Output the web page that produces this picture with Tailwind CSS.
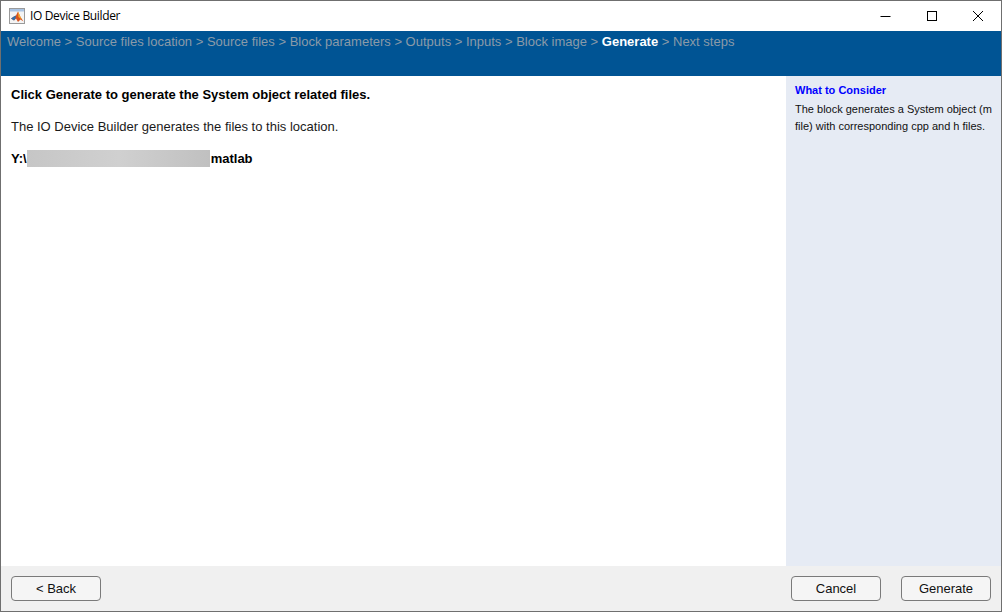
<!DOCTYPE html>
<html>
<head>
<meta charset="utf-8">
<script src="https://cdn.jsdelivr.net/npm/@tailwindcss/browser@4"></script>
</head>
<body class="m-0 bg-white">
<div class="w-[1002px] h-[612px] flex flex-col border border-[#6f6f6f] overflow-hidden font-['Liberation_Sans',Arial,sans-serif] text-black">
  <div class="h-[30px] shrink-0 flex items-center bg-white">
    <svg class="ml-[8px] w-[16px] h-[16px] shrink-0" viewBox="0 0 16 16">
      <rect x="0.5" y="0.5" width="15" height="15" fill="#f4f4f4" stroke="#9a9a9a"/>
      <rect x="1" y="1" width="14" height="2.5" fill="#a9c4e4"/>
      <path d="M2 10.5 L5 8.5 L7 7.5 L9 3.5 L11.5 9 L14.5 13.5 L11.5 11.5 L9 14 L7 10.5 L5 12.5 Z" fill="#d9541e"/>
      <path d="M2 10.5 L5 8.5 L7 7.5 L6.5 10.5 L5 12.5 Z" fill="#2f6fb0"/>
      <path d="M9 3.5 L11.5 9 L13 11.5 L9.5 9 Z" fill="#f5b030"/>
    </svg>
    <span class="ml-[5px] text-[12px] font-['Open_Sans',sans-serif] leading-none tracking-[-0.35px]">IO Device Builder</span>
    <div class="ml-auto flex items-center">
      <svg class="w-[46px] h-[30px]" viewBox="0 0 46 30"><path d="M17.5 15.5 H27.5" stroke="#000" fill="none"/></svg>
      <svg class="w-[46px] h-[30px]" viewBox="0 0 46 30"><rect x="18.5" y="10.5" width="9" height="9" stroke="#000" fill="none"/></svg>
      <svg class="w-[46px] h-[30px]" viewBox="0 0 46 30"><path d="M18 10 L28 20 M28 10 L18 20" stroke="#000" fill="none"/></svg>
    </div>
  </div>
  <div class="h-[45px] shrink-0 bg-[#005494] px-[6px] pt-[3px] text-[13px] leading-[16px] text-[#8a9aa8] whitespace-pre">Welcome &gt; Source files location &gt; Source files &gt; Block parameters &gt; Outputs &gt; Inputs &gt; Block image &gt; <b class="text-white font-bold">Generate</b> &gt; Next steps</div>
  <div class="flex-1 flex min-h-0">
    <div class="flex-1 pl-[10px] pt-[11px] text-[13px] leading-[16px] flex flex-col items-start">
      <p class="font-bold">Click Generate to generate the System object related files.</p>
      <p class="mt-[16px] text-[#1a1a1a]">The IO Device Builder generates the files to this location.</p>
      <p class="mt-[15px] font-bold flex items-center h-[17px]"><span>Y:\</span><span class="w-[183px] h-[17px] bg-gradient-to-r from-[#c6c6c6] via-[#d0d0d0] to-[#c0c0c0]"></span><span class="ml-[1px]">matlab</span></p>
    </div>
    <div class="w-[215px] shrink-0 bg-[#e6ebf4] pl-[9px] pt-[7px] pr-[4px] text-[11px]">
      <p class="text-[#0000ff] font-bold leading-[14px]">What to Consider</p>
      <p class="mt-[4px] leading-[17px] text-[#111]">The block generates a System object (m file) with corresponding cpp and h files.</p>
    </div>
  </div>
  <div class="h-[45px] shrink-0 bg-[#f0f0f0] flex items-start pt-[10px] pl-[10px] pr-[10px] text-[13px]">
    <button class="w-[90px] h-[25px] rounded-[4px] border border-[#7a7a7a] bg-[#f5f5f5] text-[#111]">&lt; Back</button>
    <button class="ml-auto w-[90px] h-[25px] rounded-[4px] border border-[#7a7a7a] bg-[#f5f5f5] text-[#111]">Cancel</button>
    <button class="ml-[20px] w-[90px] h-[25px] rounded-[4px] border border-[#7a7a7a] bg-[#f5f5f5] text-[#111]">Generate</button>
  </div>
</div>
</body>
</html>
